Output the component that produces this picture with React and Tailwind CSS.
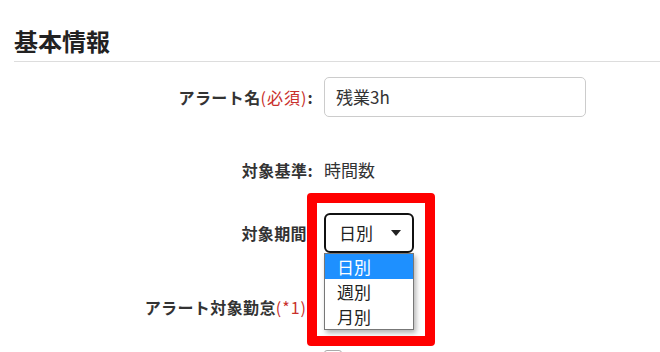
import React from 'react';

const jp = "font-['Meiryo','Noto_Sans_CJK_JP',sans-serif]";

function Label({ children, pad }) {
  return (
    <div className={`w-[299px] shrink-0 text-right text-[16px] font-bold tracking-[0.4px] text-[#333] ${pad ? 'pr-[6px]' : ''}`}>
      {children}
    </div>
  );
}

export default function App() {
  return (
    <div className={`relative w-[660px] h-[352px] overflow-hidden bg-white text-[#333] ${jp}`}>
      <div className="pl-[14px] pt-[25px]">
        <h2 className="text-[24px] font-bold leading-[32px] text-[#222]">基本情報</h2>
      </div>
      <div className="ml-[14px] mt-[4px] border-t border-[#ddd]" />

      <div className="pl-[14px]">
        {/* アラート名 */}
        <div className="mt-[15px] flex h-[40px] items-center gap-[11px]">
          <Label>
            アラート名<span className="font-normal tracking-[1px] text-[#c9302c]">(必須)</span>:
          </Label>
          <div className="flex h-[40px] w-[262px] items-center rounded-[5px] border border-[#ccc] px-[11px] text-[17px] text-[#333]">
            残業3h
          </div>
        </div>

        {/* 対象基準 */}
        <div className="mt-[43px] flex h-[20px] items-center gap-[11px]">
          <Label>対象基準:</Label>
          <div className="text-[17px]">時間数</div>
        </div>

        {/* 対象期間 */}
        <div className="mt-[33px] flex h-[40px] items-center gap-[11px]">
          <Label pad>対象期間</Label>
          <div className="relative">
            <div className="flex h-[40px] w-[90px] items-center justify-between rounded-[6px] border-2 border-[#111] pl-[13px] pr-[11px] text-[17px] text-[#222]">
              <span>日別</span>
              <svg width="10" height="6" viewBox="0 0 10 6">
                <path d="M0 0h10L5 6z" fill="#222" />
              </svg>
            </div>
            <div className="absolute left-0 top-[40px] z-10 w-[90px] border border-[#777] bg-white text-[17px] leading-[25px] shadow-[2px_3px_5px_rgba(0,0,0,0.3)]">
              <div className="bg-[#1e90ff] pl-[12px] text-white">日別</div>
              <div className="pl-[12px] text-[#222]">週別</div>
              <div className="pl-[12px] text-[#222]">月別</div>
            </div>
          </div>
        </div>

        {/* アラート対象勤怠 */}
        <div className="mt-[44px] flex h-[20px] items-center gap-[11px]">
          <Label pad>
            アラート対象勤怠<span className="font-normal tracking-[1px] text-[#c9302c]">(*1)</span>
          </Label>
        </div>

        <div className="mt-[33px] flex items-start gap-[11px]">
          <div className="w-[299px] shrink-0" />
          <div className="flex items-start gap-[18px]">
            <div className="h-[18px] w-[18px] rounded-[3px] border border-[#aaa] bg-white" />
            <span className="text-[16px] leading-[20px]">平日勤務</span>
          </div>
        </div>
      </div>

      {/* highlight frame */}
      <div className="pointer-events-none absolute left-[307px] top-[193px] z-20 h-[153px] w-[128px] rounded-[4px] border-[10px] border-[#ff0000]" />
    </div>
  );
}
